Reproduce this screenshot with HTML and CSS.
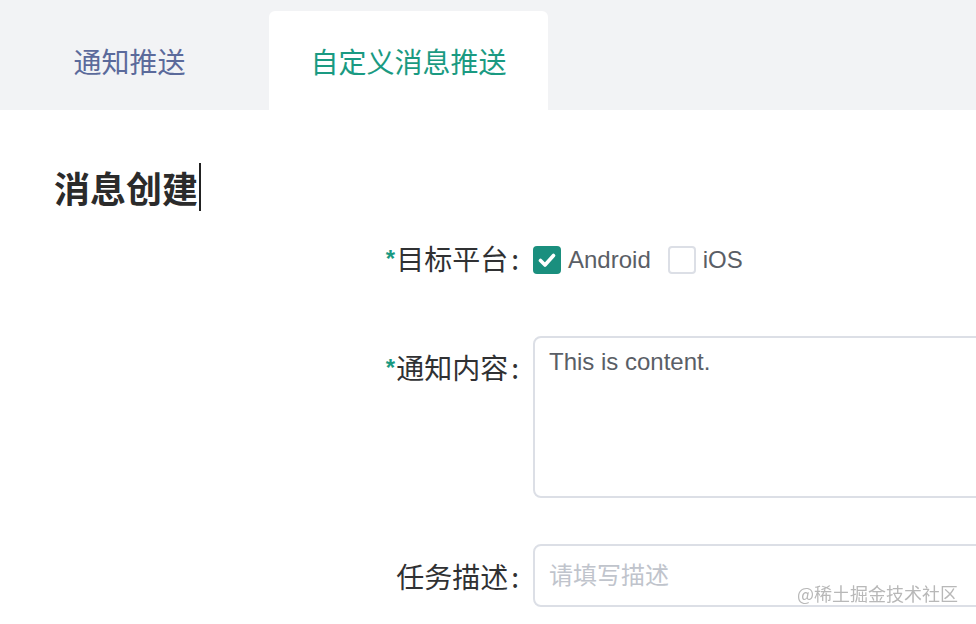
FILE: index.html
```html
<!DOCTYPE html>
<html lang="zh-CN">
<head>
    <meta charset="UTF-8">
    <meta name="viewport" content="width=device-width, initial-scale=1.0">
    <title>消息创建</title>
    <link rel="stylesheet" href="styles.css">
</head>
<body>
    <div class="tabs">
        <div class="tab tab-plain">通知推送</div>
        <div class="tab tab-active">自定义消息推送</div>
    </div>

    <h1 class="title">消息创建<span class="caret"></span></h1>

    <div class="form">
        <div class="form-row row-center">
            <label class="form-label"><span class="req">*</span>目标平台<span class="colon">:</span></label>
            <div class="checks">
                <span class="check">
                    <span class="box box-on">
                        <svg width="28" height="28" viewBox="0 0 28 28"><polyline points="7.5,14.5 12,19 20.5,9.5" fill="none" stroke="#fff" stroke-width="3.6" stroke-linecap="round" stroke-linejoin="round"/></svg>
                    </span>
                    Android
                </span>
                <span class="check">
                    <span class="box"></span>
                    iOS
                </span>
            </div>
        </div>

        <div class="form-row row-area">
            <label class="form-label label-top"><span class="req">*</span>通知内容<span class="colon">:</span></label>
            <textarea class="field area">This is content.</textarea>
        </div>

        <div class="form-row row-center row-input">
            <label class="form-label">任务描述<span class="colon">:</span></label>
            <input class="field input" type="text" placeholder="请填写描述">
        </div>
    </div>

    <div class="watermark">@稀土掘金技术社区</div>
</body>
</html>
```

FILE: styles.css
```css
html, body {
    overflow: hidden;
}
body {
    margin: 0;
    font-family: "Liberation Sans", "Noto Sans CJK SC", sans-serif;
    color: #303133;
    background: #fff;
}
.tabs {
    height: 110px;
    background: #f2f3f5;
    display: flex;
    align-items: flex-end;
}
.tab {
    height: 99px;
    display: flex;
    align-items: center;
    justify-content: center;
    font-family: "Noto Sans CJK SC", sans-serif;
    font-size: 28px;
}
.tab-plain {
    width: 259px;
    color: #5b6a9b;
}
.tab-active {
    width: 279px;
    margin-left: 10px;
    background: #fff;
    border-radius: 6px 6px 0 0;
    color: #1a9a82;
}
.title {
    margin: 53px 0 0 54px;
    font-family: "Noto Sans CJK SC", sans-serif;
    font-size: 36px;
    line-height: 48px;
    font-weight: 600;
    color: #2b2b2b;
    display: flex;
    align-items: center;
}
.caret {
    display: inline-block;
    width: 2px;
    height: 48px;
    margin-left: 1px;
    background: #222;
}
.form {
    margin-top: 27px;
}
.form-row {
    display: flex;
    align-items: flex-start;
}
.row-center {
    align-items: center;
}
.row-area {
    margin-top: 54px;
}
.row-input {
    margin-top: 46px;
}
.form-label {
    width: 533px;
    flex-shrink: 0;
    box-sizing: border-box;
    padding-right: 14px;
    text-align: right;
    font-family: "Noto Sans CJK SC", sans-serif;
    font-size: 28px;
    line-height: 40px;
    color: #303133;
}
.colon {
    margin-left: 3px;
}
.label-top {
    margin-top: 11px;
}
.req {
    color: #1a9a82;
    font-family: "Liberation Sans", sans-serif;
    font-weight: 700;
    font-size: 24px;
    margin-right: 1px;
    position: relative;
    top: -3px;
}
.checks {
    display: flex;
    align-items: center;
    height: 28px;
}
.check {
    display: flex;
    align-items: center;
    gap: 7px;
    margin-right: 17px;
    font-size: 24px;
    color: #5a5e66;
}
.box {
    width: 28px;
    height: 28px;
    box-sizing: border-box;
    border: 2px solid #dcdfe6;
    border-radius: 4px;
    background: #fff;
    display: flex;
}
.box-on {
    border: none;
    background: #1a8f7e;
}
.field {
    flex-shrink: 0;
    width: 480px;
    box-sizing: border-box;
    border: 2px solid #dcdfe6;
    border-radius: 8px;
    font-family: "Liberation Sans", "Noto Sans CJK SC", sans-serif;
    font-size: 24px;
    color: #5a5e66;
    padding: 0 14px;
    outline: none;
    background: #fff;
}
.area {
    height: 162px;
    padding-top: 6px;
    line-height: 36px;
    resize: none;
}
.input {
    height: 63px;
}
.input::placeholder {
    color: #c0c4cc;
    font-family: "Noto Sans CJK SC", sans-serif;
}
.watermark {
    position: fixed;
    right: 18px;
    bottom: 18px;
    font-family: "Noto Sans CJK SC", sans-serif;
    font-size: 18px;
    color: #b8b8b8;
}
```
